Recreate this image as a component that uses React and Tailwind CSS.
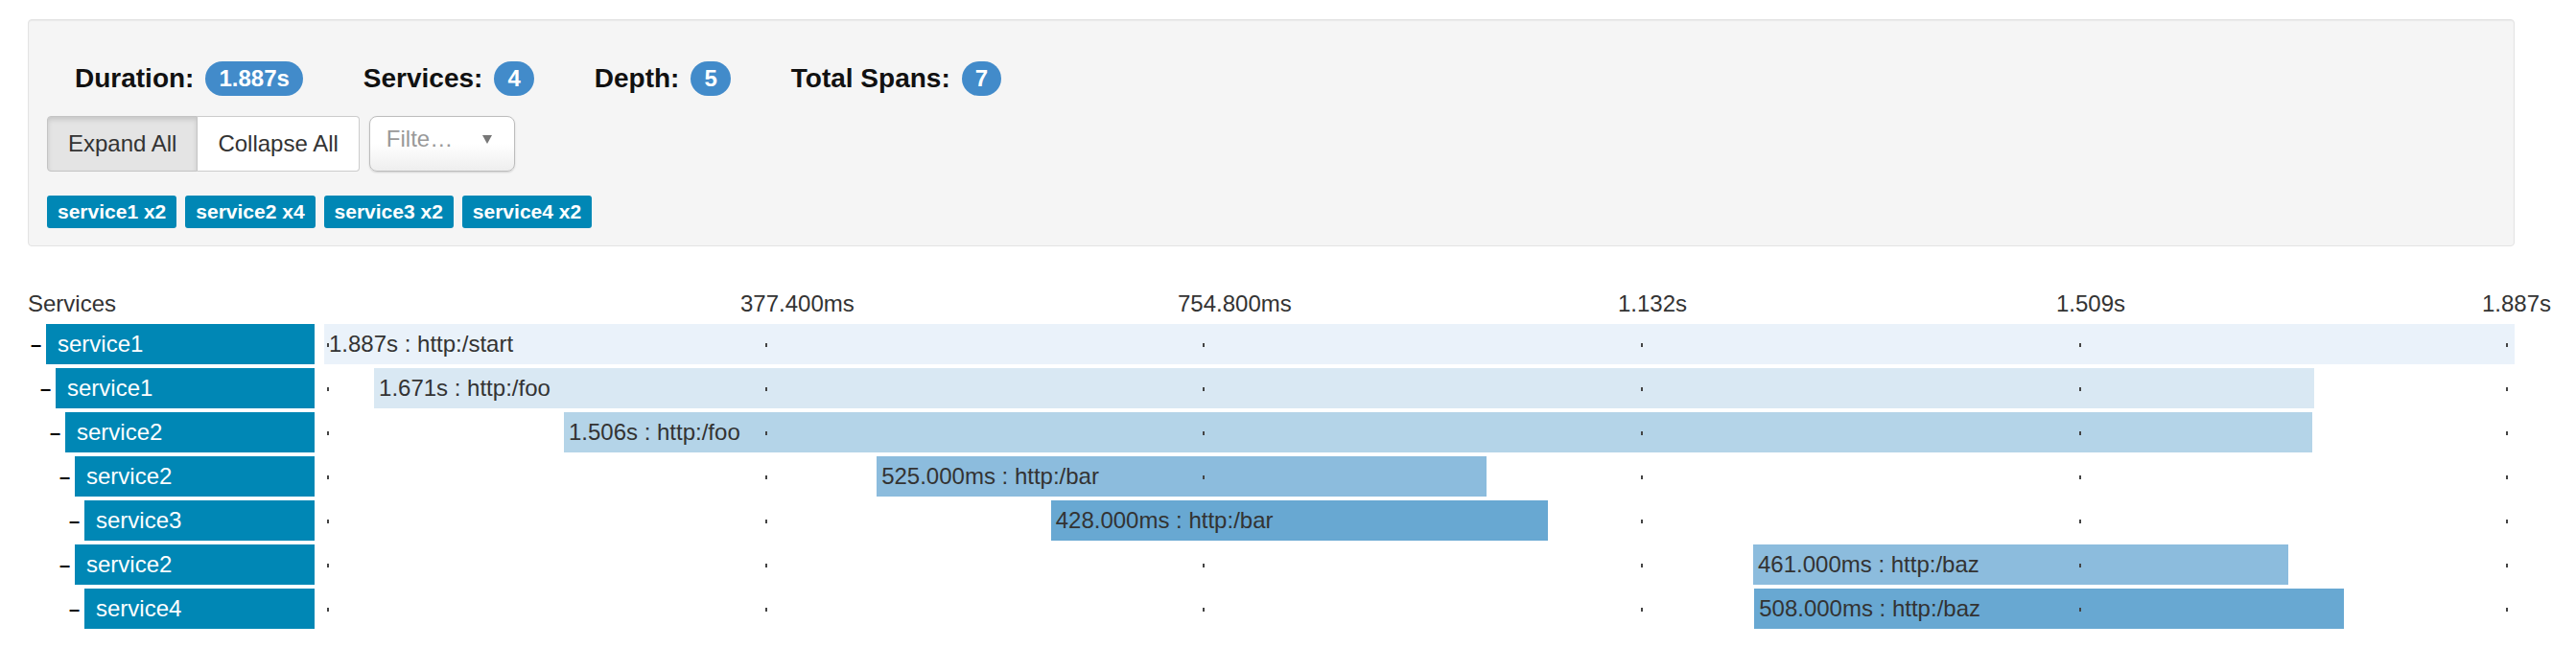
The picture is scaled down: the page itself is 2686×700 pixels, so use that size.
import React from 'react';

const TOTAL = 1887;

const stats = [
  { label: 'Duration:', value: '1.887s' },
  { label: 'Services:', value: '4' },
  { label: 'Depth:', value: '5' },
  { label: 'Total Spans:', value: '7' },
];

const tags = ['service1 x2', 'service2 x4', 'service3 x2', 'service4 x2'];

// depth -> left offset of the collapse dash
const indent = ['ml-[3px]', 'ml-[13px]', 'ml-[23px]', 'ml-[33px]', 'ml-[43px]'];

const spans = [
  { service: 'service1', depth: 0, start: 0, dur: 1887, label: '1.887s : http:/start', color: 'bg-[#eaf2fa]' },
  { service: 'service1', depth: 1, start: 43, dur: 1671, label: '1.671s : http:/foo', color: 'bg-[#d9e8f3]' },
  { service: 'service2', depth: 2, start: 206.5, dur: 1506, label: '1.506s : http:/foo', color: 'bg-[#b4d4e8]' },
  { service: 'service2', depth: 3, start: 476, dur: 525, label: '525.000ms : http:/bar', color: 'bg-[#8cbcdd]' },
  { service: 'service3', depth: 4, start: 626, dur: 428, label: '428.000ms : http:/bar', color: 'bg-[#68a8d2]' },
  { service: 'service2', depth: 3, start: 1231, dur: 461, label: '461.000ms : http:/baz', color: 'bg-[#8cbcdd]' },
  { service: 'service4', depth: 4, start: 1232, dur: 508, label: '508.000ms : http:/baz', color: 'bg-[#68a8d2]' },
];

// tick marks inside the 2284px track
const ticks = [3, 460, 916, 1373, 1830, 2275];
const markers = [
  { left: 434, text: '377.400ms' },
  { left: 890, text: '754.800ms' },
  { left: 1349, text: '1.132s' },
  { left: 1806, text: '1.509s' },
  { left: 2250, text: '1.887s' },
];

const pct = (ms) => `${(ms / TOTAL) * 100}%`;

const SpanRow = ({ span }) => (
  <div className="flex h-[42px] items-stretch">
    <div className="flex w-[299px] shrink-0 items-center">
      <span className={`${indent[span.depth]} w-[11px] shrink-0 text-[20px] font-bold leading-none text-black`}>–</span>
      <div className="ml-[5px] flex h-full flex-1 items-center bg-[#0087b5] pl-[12px] text-[24px] text-white">
        {span.service}
      </div>
    </div>
    <div className="relative ml-[10px] flex-1">
      <div
        className={`absolute top-0 flex h-full items-center pl-[5px] text-[24px] whitespace-nowrap text-[#333] ${span.color}`}
        style={{ left: pct(span.start), width: pct(span.dur) }}
      >
        {span.label}
      </div>
      {ticks.map((t) => (
        <div
          key={t}
          className="absolute top-[20px] h-[4px] w-[2px] bg-[#444]"
          style={{ left: t }}
        />
      ))}
    </div>
  </div>
);

export default function App() {
  return (
    <div className="min-h-[700px] w-[2686px] bg-white pt-[20px] font-['Liberation_Sans',Arial,sans-serif]">
      <div className="ml-[29px] mr-[64px] rounded-[4px] border border-[#e3e3e3] bg-[#f5f5f5] px-[19px] pt-[19px] pb-[18px] shadow-[inset_0_1px_1px_rgba(0,0,0,0.05)]">
        <div className="ml-[29px] mt-[24px] flex h-[36px] items-center gap-[63px]">
          {stats.map((s) => (
            <div key={s.label} className="flex items-center gap-[12px]">
              <span className="text-[28px] font-bold text-[#111]">{s.label}</span>
              <span className="flex h-[36px] items-center rounded-full bg-[#428bca] px-[14px] text-[24px] font-bold text-white">
                {s.value}
              </span>
            </div>
          ))}
        </div>

        <div className="mt-[21px] flex items-center">
          <div className="flex">
            <button className="h-[58px] rounded-l-[4px] border border-[#c4c4c4] bg-[#e4e4e4] px-[21px] text-[24px] text-[#333] shadow-[inset_0_3px_5px_rgba(0,0,0,0.125)]">
              Expand All
            </button>
            <button className="h-[58px] rounded-r-[4px] border border-l-0 border-[#ccc] bg-white px-[21px] text-[24px] text-[#333]">
              Collapse All
            </button>
          </div>
          <div className="ml-[10px] flex h-[58px] w-[152px] items-center justify-between rounded-[8px] border border-[#bdbdbd] bg-linear-to-b from-white from-50% to-[#eeeeee] pb-[10px] pl-[17px] pr-[23px] shadow-[0_1px_2px_rgba(0,0,0,0.15)]">
            <span className="text-[24px] text-[#999]">Filte…</span>
            <svg width="10" height="9" viewBox="0 0 10 9">
              <polygon points="0,0 10,0 5,9" fill="#777" />
            </svg>
          </div>
        </div>

        <div className="mt-[25px] flex gap-[9px]">
          {tags.map((t) => (
            <span key={t} className="flex h-[34px] items-center rounded-[3px] bg-[#0087b5] px-[11px] text-[21px] font-bold text-white">
              {t}
            </span>
          ))}
        </div>
      </div>

      <div className="pl-[29px] pr-[64px]">
        <div className="mt-[46px] flex h-[28px] text-[24px] leading-[28px] text-[#333]">
          <div className="w-[309px] shrink-0">Services</div>
          <div className="relative flex-1">
            {markers.map((m) => (
              <span key={m.text} className="absolute top-0 whitespace-nowrap" style={{ left: m.left }}>
                {m.text}
              </span>
            ))}
          </div>
        </div>

        <div className="mt-[7px] flex flex-col gap-[4px]">
          {spans.map((s, i) => (
            <SpanRow key={i} span={s} />
          ))}
        </div>
      </div>
    </div>
  );
}
